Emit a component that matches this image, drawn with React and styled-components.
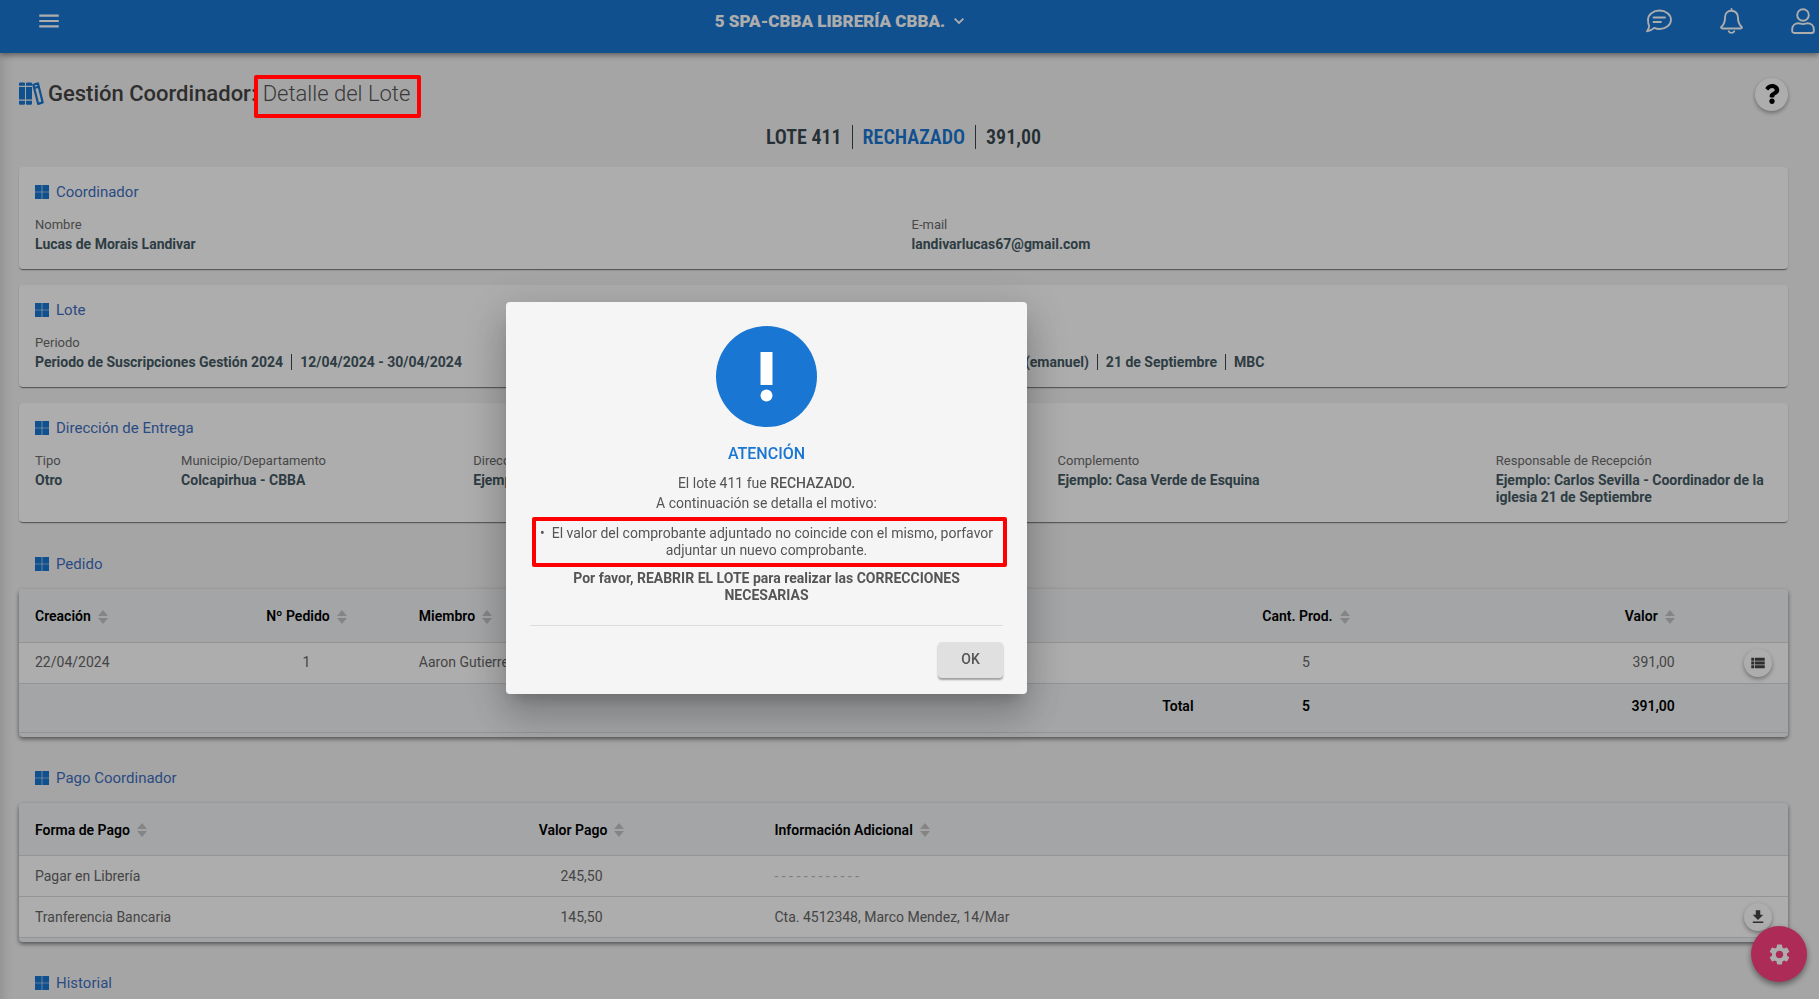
import { useState } from "react";
import styled, { createGlobalStyle } from "styled-components";
import { MdMenu, MdViewList, MdFileDownload, MdSettings } from "react-icons/md";
import { FaQuestion } from "react-icons/fa";

const primary = "#1976d2";

const GlobalStyle = createGlobalStyle`
  * {
    box-sizing: border-box;
  }
  html,
  body {
    margin: 0;
    height: 100%;
    overflow: hidden;
  }
  body {
    background-color: #f4f4f4;
    color: #455a64;
    font: 14px/17px Roboto, sans-serif;
  }
  button {
    font: inherit;
    color: inherit;
    border: 0;
    padding: 0;
    background: none;
    cursor: pointer;
  }
`;

const Topbar = styled.header`
  display: grid;
  grid-template-columns: 1fr auto 1fr;
  align-items: center;
  height: 53px;
  padding: 0 4px 12px 36px;
  color: #fff;
  background-color: ${primary};
  box-shadow: 0 2px 6px rgba(0, 0, 0, 0.45);
`;

const IconButton = styled.button`
  display: flex;
  justify-self: start;
`;

const UnitButton = styled.button`
  display: flex;
  align-items: center;
  gap: 9px;
  margin-right: 172px;
  font-size: 17px;
  font-weight: 900;
  line-height: 20px;
`;

const TopActions = styled.nav`
  display: flex;
  justify-content: flex-end;
  gap: 48px;
`;

const Page = styled.main`
  padding: 22px 31px 40px 19px;
  box-shadow: inset 16px 0 16px -16px rgba(0, 0, 0, 0.2);
`;

const PageHead = styled.div`
  display: flex;
  justify-content: space-between;
  align-items: center;
  height: 38px;
`;

const Title = styled.h1`
  display: flex;
  align-items: center;
  margin: 0;
  gap: 4px;
  font-size: 22px;
  font-weight: 500;
  line-height: 26px;
  color: #444;
`;

const Subtitle = styled.span`
  position: relative;
  padding-left: 6px;
  font-weight: 300;
  color: #555;
`;

const RedMark = styled.span`
  position: absolute;
  inset: ${({ inset }) => inset};
  z-index: 30;
  border: 4px solid #f00;
  border-radius: 2px;
  pointer-events: none;
`;

const RoundButton = styled.button`
  display: inline-flex;
  align-items: center;
  justify-content: center;
  width: ${({ size }) => size}px;
  height: ${({ size }) => size}px;
  border-radius: 50%;
  color: ${({ color }) => color || "#444"};
  background-color: #fff;
  box-shadow: 0 2px 4px rgba(0, 0, 0, 0.35);
`;

const Status = styled.div`
  display: flex;
  justify-content: center;
  align-items: center;
  height: 48px;
  margin-bottom: 6px;
  font: 600 20px/24px "Roboto Condensed", Roboto, sans-serif;
  color: #37474f;

  b {
    font-weight: 600;
    padding: 0 10px;
  }
  b + b {
    border-left: 1px solid #37474f;
  }
  b:nth-child(2) {
    color: ${primary};
  }
`;

const Card = styled.section`
  margin-bottom: 16px;
  padding: 16px 0 16px 16px;
  border-radius: 4px;
  background-color: #fff;
  box-shadow: 0 2px 1px -1px rgba(0, 0, 0, 0.4), 0 1px 2px rgba(0, 0, 0, 0.2);
`;

const Heading = styled.h2`
  display: flex;
  align-items: center;
  gap: 7px;
  margin: 0;
  padding-left: ${({ inset }) => (inset ? "16px" : "0")};
  font-size: 15px;
  font-weight: 400;
  line-height: 18px;
  color: #3f6fc0;
`;

const Fields = styled.dl`
  display: grid;
  grid-template-columns: repeat(12, 1fr);
  margin: 15px 0 0;
`;

const Field = styled.div`
  grid-column: span ${({ span }) => span};
  padding-right: 16px;

  dt {
    font-size: 13px;
    line-height: 18px;
    color: #6b6b6b;
  }
  dd {
    margin: 2px 0 0;
    font-weight: 700;
  }
`;

const Sep = styled.span`
  margin: 0 8px;
  border-left: 1px solid #37474f;
`;

const TableBlock = styled.section`
  padding-top: ${({ top }) => top}px;
`;

const TableCard = styled.div`
  margin-top: 16px;
  padding-bottom: 4px;
  border-radius: 4px;
  overflow: hidden;
  background-color: #f1f4f7;
  box-shadow: 0 2px 4px rgba(0, 0, 0, 0.5);
`;

const Table = styled.table`
  width: 100%;
  table-layout: fixed;
  border-collapse: collapse;
  color: #666;

  th,
  td {
    height: 41px;
    padding: 0 16px;
    font-weight: 400;
    text-align: left;
    white-space: nowrap;
    background-color: #fff;
    border-bottom: 1px solid #d8dadc;
  }
  thead th,
  tfoot td {
    height: 53px;
    padding-top: 3px;
    font-weight: 600;
    color: #000;
    background-color: #f1f4f7;
  }
  tfoot td {
    height: 49px;
    padding-top: 0;
    padding-bottom: 2px;
  }
  .center {
    text-align: center;
  }
  .right {
    text-align: right;
  }
`;

const SortButton = styled.button`
  display: inline-flex;
  align-items: center;
  gap: 7px;
  color: inherit;
  font-weight: 600;
`;

const Muted = styled.span`
  color: #b0bec5;
`;

const Fab = styled(RoundButton)`
  position: fixed;
  right: 12px;
  bottom: 17px;
  color: #fff;
  background-color: #ff4081;
  box-shadow: 0 3px 6px rgba(0, 0, 0, 0.45);
`;

const Overlay = styled.div`
  position: fixed;
  inset: 0;
  z-index: 20;
  display: flex;
  align-items: center;
  justify-content: center;
  padding: 0 286px 4px 0;
  background-color: rgba(0, 0, 0, 0.32);
`;

const Dialog = styled.div`
  width: 521px;
  padding: 24px 24px 16px;
  border-radius: 4px;
  text-align: center;
  color: #555;
  background-color: #f5f5f5;
  box-shadow: 0 11px 15px -7px rgba(0, 0, 0, 0.2),
    0 24px 38px 3px rgba(0, 0, 0, 0.14), 0 9px 46px 8px rgba(0, 0, 0, 0.12);

  > svg {
    display: block;
    margin: 0 auto;
  }
  h3 {
    margin: 17px 0 9px;
    font-size: 16px;
    font-weight: 500;
    line-height: 20px;
    color: ${primary};
  }
  p {
    margin: 0;
    line-height: 20px;
  }
  b {
    font-weight: 500;
  }
`;

const Reasons = styled.ul`
  position: relative;
  margin: 12px 0 11px;
  padding: 0;
  list-style: none;

  li::before {
    content: "•";
    margin-right: 7px;
  }
`;

const Notice = styled.div`
  padding: 0 16px 21px;
  font-weight: 700;
  color: #555;
`;

const DialogActions = styled.div`
  display: flex;
  justify-content: flex-end;
  padding-top: 16px;
  border-top: 1px solid #ddd;
`;

const OkButton = styled.button`
  width: 65px;
  height: 36px;
  border-radius: 4px;
  font-weight: 500;
  background-color: #e0e0e0;
  box-shadow: 0 2px 2px rgba(0, 0, 0, 0.35);
`;

const BooksIcon = () => (
  <svg width="25" height="24" viewBox="0 0 25 24" fill={primary} aria-hidden="true">
    <path d="M1 .5h4q1 0 1 1v2.300H0V1.500q0-1 1-1zM0 5h6v12.500H0zM0 18.800h6v3q0 1-1 1H1q-1 0-1-1z" />
    <path d="M8 .5h4q1 0 1 1v2.300H7V1.500q0-1 1-1zM7 5h6v12.500H7zM7 18.800h6v3q0 1-1 1H8q-1 0-1-1z" />
    <path
      d="M14.300 2.700l4.700-1.300 4.700 19-4.500 1.500zM15 6l4.700-1.300"
      fill="none"
      stroke={primary}
      strokeWidth="2.200"
      strokeLinejoin="round"
    />
  </svg>
);

const ChatIcon = () => (
  <svg width="26" height="26" viewBox="0 0 26 26" fill="none" stroke="currentColor" strokeWidth="1.800" strokeLinecap="round" strokeLinejoin="round" aria-hidden="true">
    <path d="M13.500 2.500c6.300 0 11.500 4.100 11.500 9.200s-5.200 9.300-11.500 9.300c-1.900 0-3.700-.4-5.300-1.100C6.600 21.400 4.400 23 1 23.300c1.300-1.600 2-3.300 2.200-5.200C2.300 16.300 2 14 2 11.700 2 6.600 7.200 2.500 13.500 2.500z" />
    <path d="M7.500 9.500h11.500M7.500 14h7.500" />
  </svg>
);

const BellIcon = () => (
  <svg width="23" height="26" viewBox="0 0 23 26" fill="none" stroke="currentColor" strokeWidth="1.900" strokeLinecap="round" strokeLinejoin="round" aria-hidden="true">
    <path d="M11.500 1v1.800M11.500 2.800c-4 0-6.500 3-6.500 6.700 0 5-1.300 7.300-3.500 9.200-.8.800-.3 1.800.8 1.800h18.400c1.100 0 1.600-1 .8-1.800-2.200-1.900-3.500-4.200-3.500-9.200 0-3.700-2.500-6.700-6.500-6.700z" />
    <path d="M8.800 23.300c.5 1.100 1.500 1.600 2.700 1.600s2.200-.5 2.700-1.600" />
  </svg>
);

const UserIcon = () => (
  <svg width="24" height="26" viewBox="0 0 24 26" fill="none" stroke="currentColor" strokeWidth="1.900" strokeLinejoin="round" aria-hidden="true">
    <circle cx="12" cy="7" r="5.800" />
    <path d="M7.500 15.300c1.500 0 2.300.8 4.500.8s3-.8 4.500-.8c3.600 0 6.300 2.600 6.300 6.200v1.500c0 1.200-.8 2-2 2H3.200c-1.200 0-2-.8-2-2v-1.500c0-3.600 2.700-6.200 6.300-6.200z" />
  </svg>
);

const GridIcon = () => (
  <svg width="14" height="14" viewBox="0 0 14 14" fill={primary} aria-hidden="true">
    <path d="M0 0h6.700v6.700H0zM7.300 0H14v6.700H7.300zM0 7.300h6.700V14H0zM7.300 7.300H14V14H7.300z" />
  </svg>
);

const SortIcon = () => (
  <svg width="10" height="14" viewBox="0 0 10 14" fill="#c4c4c4" aria-hidden="true">
    <path d="M5 0l5 6H0zM5 14l5-6H0z" />
  </svg>
);

const AlertIcon = () => (
  <svg width="101" height="101" viewBox="0 0 101 101" aria-hidden="true">
    <circle cx="50.500" cy="50.500" r="50.500" fill={primary} />
    <path d="M44.500 26h12v33h-12z" fill="#fff" />
    <circle cx="50.500" cy="69.500" r="6" fill="#fff" />
  </svg>
);

const Section = ({ children, inset }) => (
  <Heading inset={inset}>
    <GridIcon />
    {children}
  </Heading>
);

const InfoField = ({ span, label, children }) => (
  <Field span={span}>
    <dt>{label}</dt>
    <dd>{children}</dd>
  </Field>
);

const DataTable = ({ columns, rows, foot }) => (
  <TableCard>
    <Table>
      <colgroup>
        {columns.map((col, i) => (
          <col key={i} style={{ width: col.width }} />
        ))}
      </colgroup>
      <thead>
        <tr>
          {columns.map((col, i) => (
            <th key={i} className={col.align} scope="col">
              {col.label ? (
                <SortButton type="button">
                  {col.label}
                  <SortIcon />
                </SortButton>
              ) : null}
            </th>
          ))}
        </tr>
      </thead>
      <tbody>
        {rows.map((row, r) => (
          <tr key={r}>
            {row.map((cell, i) => (
              <td key={i} className={columns[i].align}>
                {cell}
              </td>
            ))}
          </tr>
        ))}
      </tbody>
      {foot ? <tfoot>{foot}</tfoot> : null}
    </Table>
  </TableCard>
);

const orderColumns = [
  { label: "Creación", width: "10.8%" },
  { label: "Nº Pedido", width: "10.9%", align: "center" },
  { label: "Miembro", width: "45.6%" },
  { label: "Cant. Prod.", width: "10.9%", align: "center" },
  { label: "Valor", width: "16.3%", align: "right" },
  { label: "", width: "5.5%", align: "right" },
];

const paymentColumns = [
  { label: "Forma de Pago", width: "21.8%" },
  { label: "Valor Pago", width: "20%", align: "center" },
  { label: "Información Adicional", width: "52.7%" },
  { label: "", width: "5.5%", align: "right" },
];

const App = () => {
  const [open, setOpen] = useState(true);

  const orders = [
    [
      "22/04/2024",
      "1",
      "Aaron Gutierrez",
      "5",
      "391,00",
      <RoundButton key="items" type="button" size={28} aria-label="Ver ítems">
        <MdViewList size={18} />
      </RoundButton>,
    ],
  ];

  const payments = [
    ["Pagar en Librería", "245,50", <Muted key="none">- - - - - - - - - - - -</Muted>, ""],
    [
      "Tranferencia Bancaria",
      "145,50",
      "Cta. 4512348, Marco Mendez, 14/Mar",
      <RoundButton key="file" type="button" size={28} aria-label="Descargar comprobante">
        <MdFileDownload size={18} />
      </RoundButton>,
    ],
  ];

  return (
    <>
      <GlobalStyle />
      <Topbar>
        <IconButton type="button" aria-label="Menú">
          <MdMenu size={26} />
        </IconButton>
        <UnitButton type="button">
          5 SPA-CBBA LIBRERÍA CBBA.
          <svg width="10" height="6" viewBox="0 0 10 6" fill="none" stroke="currentColor" strokeWidth="1.800" aria-hidden="true">
            <path d="M.6.600L5 5 9.400.6" />
          </svg>
        </UnitButton>
        <TopActions>
          <IconButton type="button" aria-label="Mensajes">
            <ChatIcon />
          </IconButton>
          <IconButton type="button" aria-label="Notificaciones">
            <BellIcon />
          </IconButton>
          <IconButton type="button" aria-label="Usuario">
            <UserIcon />
          </IconButton>
        </TopActions>
      </Topbar>
      <Page>
        <PageHead>
          <Title>
            <BooksIcon />
            <span>
              Gestión Coordinador:
              <Subtitle>
                Detalle del Lote
                <RedMark inset="-6px -11px -12px -3px" />
              </Subtitle>
            </span>
          </Title>
          <RoundButton type="button" size={33} color="#000" aria-label="Ayuda">
            <FaQuestion size={20} />
          </RoundButton>
        </PageHead>
        <Status>
          <b>LOTE 411</b>
          <b>RECHAZADO</b>
          <b>391,00</b>
        </Status>
        <Card>
          <Section>Coordinador</Section>
          <Fields>
            <InfoField span={6} label="Nombre">
              Lucas de Morais Landivar
            </InfoField>
            <InfoField span={6} label="E-mail">
              landivarlucas67@gmail.com
            </InfoField>
          </Fields>
        </Card>
        <Card>
          <Section>Lote</Section>
          <Fields>
            <InfoField span={6} label="Periodo">
              Periodo de Suscripciones Gestión 2024
              <Sep />
              12/04/2024 - 30/04/2024
            </InfoField>
            <InfoField span={6} label="Iglesia">
              Lucas L. Landivar (emanuel)
              <Sep />
              21 de Septiembre
              <Sep />
              MBC
            </InfoField>
          </Fields>
        </Card>
        <Card>
          <Section>Dirección de Entrega</Section>
          <Fields>
            <InfoField span={1} label="Tipo">
              Otro
            </InfoField>
            <InfoField span={2} label="Municipio/Departamento">
              Colcapirhua - CBBA
            </InfoField>
            <InfoField span={4} label="Dirección">
              Ejemplo: Av. 21 de Septiembre
            </InfoField>
            <InfoField span={3} label="Complemento">
              Ejemplo: Casa Verde de Esquina
            </InfoField>
            <InfoField span={2} label="Responsable de Recepción">
              Ejemplo: Carlos Sevilla - Coordinador de la iglesia 21 de Septiembre
            </InfoField>
          </Fields>
        </Card>
        <TableBlock top={17}>
          <Section inset>Pedido</Section>
          <DataTable
            columns={orderColumns}
            rows={orders}
            foot={
              <tr>
                <td className="right" colSpan={3}>
                  Total
                </td>
                <td className="center">5</td>
                <td className="right">391,00</td>
                <td />
              </tr>
            }
          />
        </TableBlock>
        <TableBlock top={32}>
          <Section inset>Pago Coordinador</Section>
          <DataTable columns={paymentColumns} rows={payments} />
        </TableBlock>
        <TableBlock top={32}>
          <Section inset>Historial</Section>
        </TableBlock>
      </Page>
      <Fab type="button" size={56} color="#fff" aria-label="Opciones">
        <MdSettings size={25} />
      </Fab>
      {open ? (
        <Overlay>
          <Dialog role="dialog" aria-modal="true" aria-labelledby="dialog-title">
            <AlertIcon />
            <h3 id="dialog-title">ATENCIÓN</h3>
            <p>
              El lote 411 fue <b>RECHAZADO.</b>
            </p>
            <p>A continuación se detalla el motivo:</p>
            <Reasons>
              <li>
                El valor del comprobante adjuntado no coincide con el mismo, porfavor
                adjuntar un nuevo comprobante.
                <RedMark inset="-8px -4px -8px 2px" />
              </li>
            </Reasons>
            <Notice>
              Por favor, REABRIR EL LOTE para realizar las CORRECCIONES NECESARIAS
            </Notice>
            <DialogActions>
              <OkButton type="button" onClick={() => setOpen(false)}>
                OK
              </OkButton>
            </DialogActions>
          </Dialog>
        </Overlay>
      ) : null}
    </>
  );
};

export default App;
